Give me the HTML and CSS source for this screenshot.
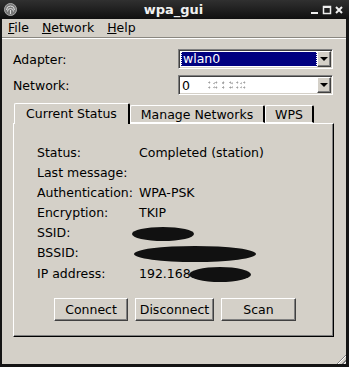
FILE: index.html
```html
<!DOCTYPE html>
<html>
<head>
<meta charset="utf-8">
<link rel="stylesheet" href="styles.css">
</head>
<body>
<div class="window">
  <div class="titlebar">
    <div class="appicon"><svg width="13" height="13" viewBox="0 0 13 13"><circle cx="6.5" cy="6.5" r="6" fill="#777" stroke="#aaa" stroke-width="1"/><path d="M3.5 8.5a3 3 0 0 1 6 0M2.5 7a4 4 0 0 1 8 0" fill="none" stroke="#ddd" stroke-width="1"/><rect x="6" y="7" width="1" height="4" fill="#ddd"/></svg></div>
    <div class="title">wpa_gui</div>
    <div class="wbtns">
      <svg width="36" height="12" viewBox="0 0 36 12"><rect x="2" y="8" width="7" height="2" fill="#eee"/><rect x="14.5" y="2.5" width="7" height="7" fill="none" stroke="#eee" stroke-width="1.5"/><rect x="15" y="2" width="6" height="2" fill="#eee"/><path d="M27 3l6 6M33 3l-6 6" stroke="#eee" stroke-width="2"/></svg>
    </div>
  </div>
  <div class="client">
    <div class="menubar">
      <span class="mi"><u>F</u>ile</span>
      <span class="mi"><u>N</u>etwork</span>
      <span class="mi"><u>H</u>elp</span>
    </div>
    <div class="sep"></div>
    <div class="formrow first">
      <span class="flabel">Adapter:</span>
      <div class="combo">
        <div class="cfield sel"><span class="focus">wlan0</span></div>
        <div class="cbtn"><span class="arrow"></span></div>
      </div>
    </div>
    <div class="formrow">
      <span class="flabel">Network:</span>
      <div class="combo">
        <div class="cfield"><span>0</span><span class="noise"></span></div>
        <div class="cbtn"><span class="arrow"></span></div>
      </div>
    </div>
    <div class="tabs">
      <div class="tabbar">
        <div class="tab active">Current Status</div>
        <div class="tab t2">Manage Networks</div>
        <div class="tab t3">WPS</div>
      </div>
      <div class="panel">
        <div class="grid">
          <span>Status:</span><span>Completed (station)</span>
          <span>Last message:</span><span></span>
          <span>Authentication:</span><span>WPA-PSK</span>
          <span>Encryption:</span><span>TKIP</span>
          <span>SSID:</span><span><i class="blob b1"></i></span>
          <span>BSSID:</span><span><i class="blob b2"></i></span>
          <span>IP address:</span><span>192.168<i class="blob b3"></i></span>
        </div>
        <div class="buttons">
          <div class="btn">Connect</div>
          <div class="btn">Disconnect</div>
          <div class="btn">Scan</div>
        </div>
      </div>
    </div>
    <div class="grip"></div>
  </div>
</div>
</body>
</html>
```
FILE: styles.css
```css
html, body { margin: 0; padding: 0; }
body { width: 349px; height: 367px; overflow: hidden; font-family: "DejaVu Sans", sans-serif; font-size: 12.5px; color: #000; }
.window { width: 349px; height: 367px; box-sizing: border-box; background: #141414; padding: 0 3px 3px 2px; display: flex; flex-direction: column; }
.titlebar { height: 19px; flex: none; display: flex; align-items: center; background: linear-gradient(#303030, #101010); margin: 0 -3px 0 -2px; padding: 0 4px 0 4px; }
.appicon { width: 14px; height: 14px; display: flex; align-items: center; }
.title { flex: 1; text-align: center; color: #f0f0f0; font-weight: bold; font-size: 13px; padding-left: 20px; }
.wbtns { width: 36px; height: 12px; display: flex; }
.client { flex: 1; background: #d4d0c8; display: flex; flex-direction: column; position: relative; }
.menubar { height: 18px; display: flex; align-items: center; padding-left: 6px; gap: 13px; }
.mi { line-height: 18px; }
.sep { height: 0; border-top: 1px solid #8a8780; border-bottom: 1px solid #fff; }
.formrow { display: flex; align-items: center; height: 20px; padding-left: 11px; margin-top: 6px; }
.formrow.first { margin-top: 10px; }
.flabel { width: 165px; }
.combo { width: 155px; height: 20px; box-sizing: border-box; display: flex; border: 1px solid; border-color: #808080 #fff #fff #808080; box-shadow: inset 1px 1px 0 #404040, inset -1px -1px 0 #d4d0c8; padding: 2px; background: #fff; }
.cfield { flex: 1; display: flex; align-items: center; padding-left: 1px; }
.cfield.sel { background: #000080; color: #fff; }
.focus { outline: 1px dotted #fff; outline-offset: 0; flex: 1; height: 14px; line-height: 14px; padding-left: 1px; margin-right: 1px; }
.noise { width: 40px; height: 9px; margin-left: 18px; background-image: radial-gradient(circle at 20% 30%, #888 0.8px, transparent 1.2px), radial-gradient(circle at 70% 60%, #aaa 0.8px, transparent 1.2px); background-size: 7px 5px, 9px 4px; opacity: 0.8; }
.cbtn { width: 14px; background: #d4d0c8; box-sizing: border-box; border: 1px solid; border-color: #fff #404040 #404040 #fff; box-shadow: inset -1px -1px 0 #808080; display: flex; align-items: center; justify-content: center; margin: -1px -1px -1px 0; }
.arrow { width: 0; height: 0; border-left: 4px solid transparent; border-right: 4px solid transparent; border-top: 4px solid #000; }
.tabs { margin: 8px 12px 0 11px; display: flex; flex-direction: column; }
.tabbar { display: flex; height: 20px; align-items: flex-end; position: relative; z-index: 1; }
.tab { height: 18px; line-height: 18px; box-sizing: border-box; border-left: 1px solid #fff; border-top: 1px solid #fff; border-right: 2px solid #000; border-radius: 2px 2px 0 0; text-align: center; }
.tab.active { width: 116px; height: 21px; line-height: 19px; margin-bottom: -1px; background: #d4d0c8; margin-left: 1px; }
.tab.t2 { width: 135px; border-bottom: 1px solid #fff; }
.tab.t3 { width: 49px; border-bottom: 1px solid #fff; }
.panel { height: 214px; box-sizing: border-box; border: 1px solid; border-color: #fff #000 #000 #fff; box-shadow: inset -1px -1px 0 #808080; display: flex; flex-direction: column; }
.grid { display: grid; grid-template-columns: 102px auto; row-gap: 4px; margin: 21px 0 0 23px; line-height: 16px; }
.blob { display: inline-block; vertical-align: middle; background: #111; border-radius: 50%; filter: blur(0.4px); }
.b1 { width: 62px; height: 14px; margin-left: -7px; }
.b2 { width: 122px; height: 16px; margin-left: -5px; }
.b3 { width: 62px; height: 15px; margin-left: -2px; }
.buttons { display: flex; gap: 7px; margin: 16px 0 0 40px; }
.btn { height: 23px; box-sizing: border-box; border: 1px solid; border-color: #fff #404040 #404040 #fff; box-shadow: inset -1px -1px 0 #808080; text-align: center; line-height: 21px; }
.btn:nth-child(1) { width: 74px; }
.btn:nth-child(2) { width: 79px; }
.btn:nth-child(3) { width: 75px; }
.grip { position: absolute; right: 0; bottom: 0; width: 12px; height: 12px; background: repeating-linear-gradient(135deg, transparent 0 2px, #808080 2px 3px, #fff 3px 4px); clip-path: polygon(100% 0, 100% 100%, 0 100%); }
```
